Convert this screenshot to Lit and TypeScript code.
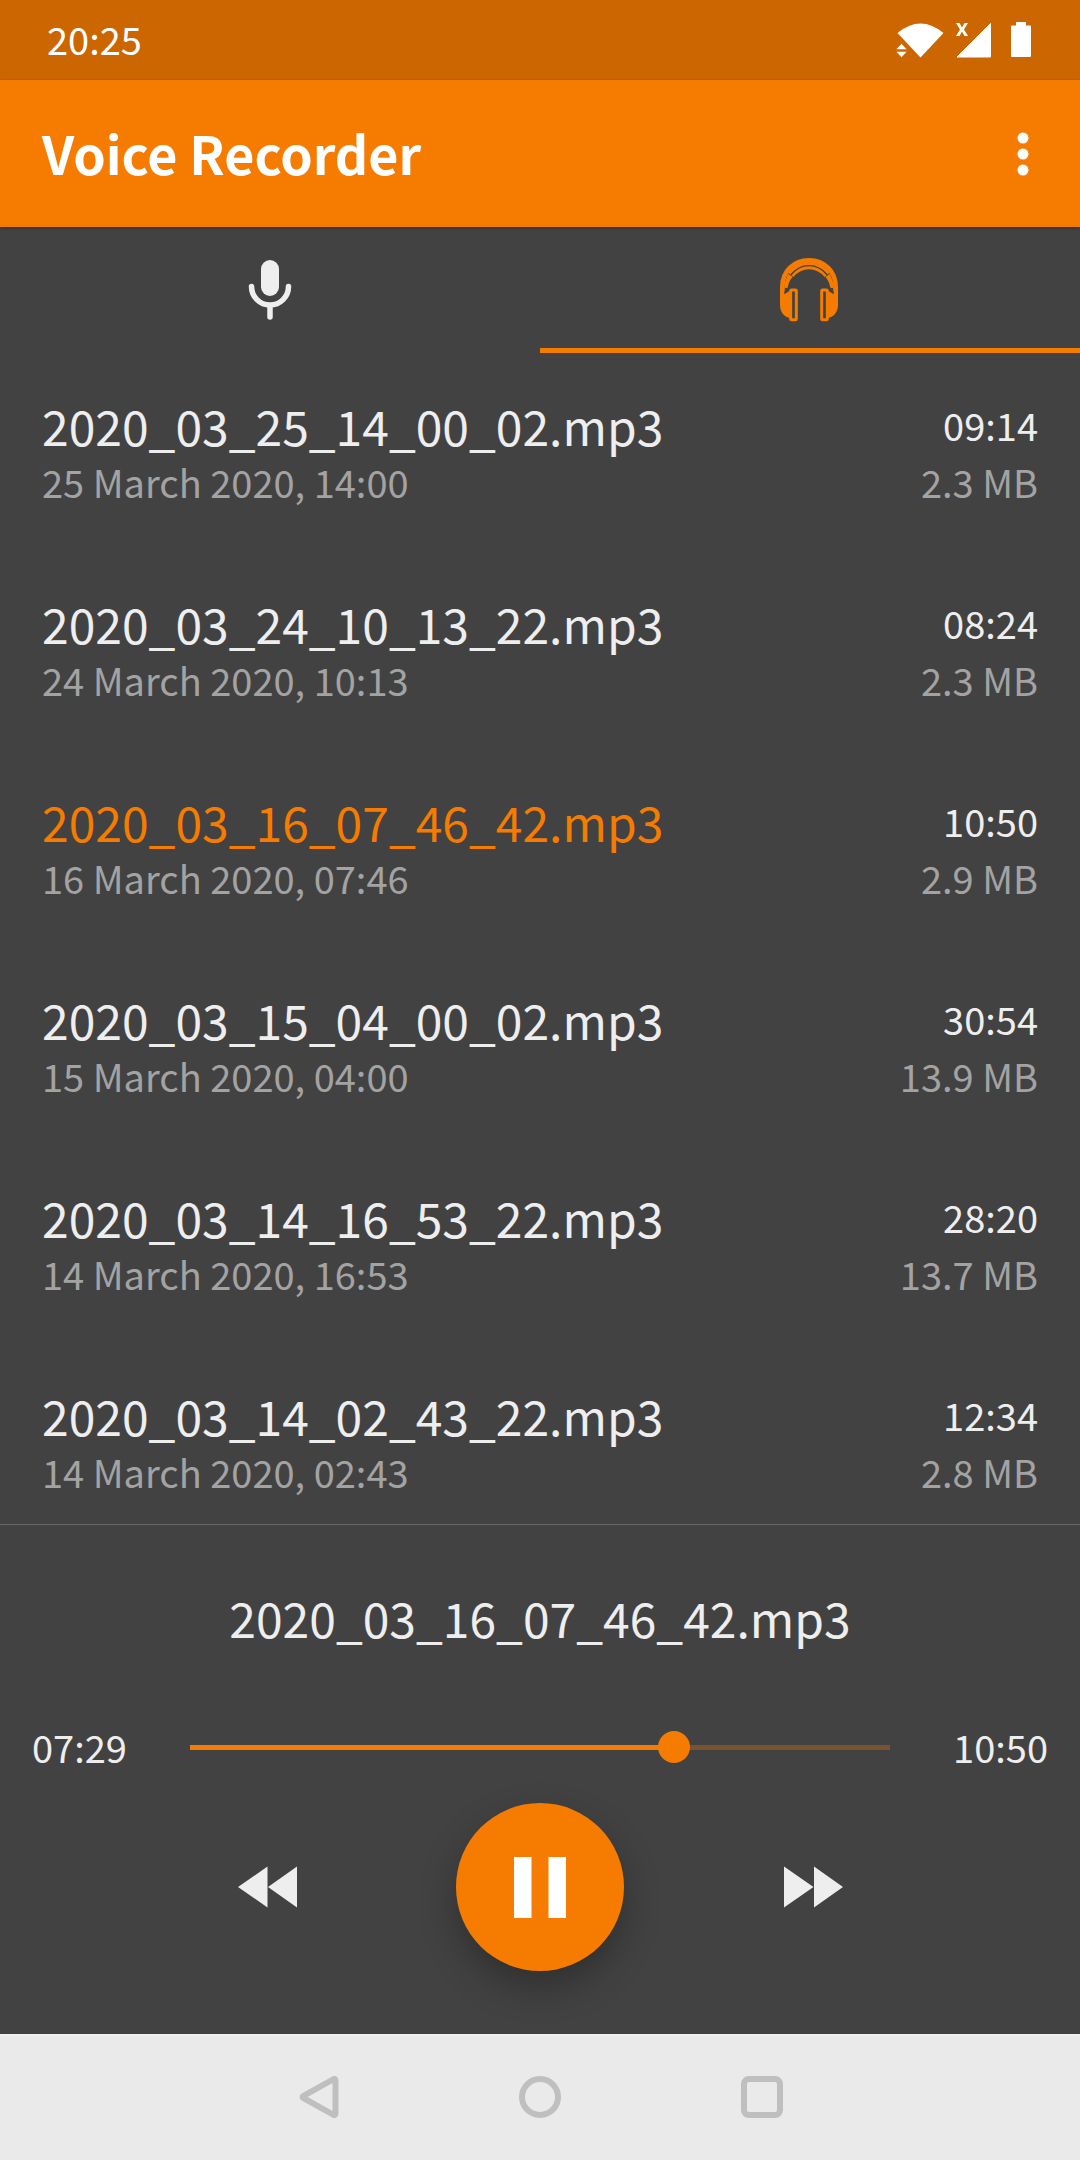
import { LitElement, html, svg, css } from "lit";
import { customElement, property, state } from "lit/decorators.js";
import { classMap } from "lit/directives/class-map.js";

interface Recording {
  name: string;
  date: string;
  length: string;
  size: string;
}

const RECORDINGS: Recording[] = [
  { name: "2020_03_25_14_00_02.mp3", date: "25 March 2020, 14:00", length: "09:14", size: "2.3 MB" },
  { name: "2020_03_24_10_13_22.mp3", date: "24 March 2020, 10:13", length: "08:24", size: "2.3 MB" },
  { name: "2020_03_16_07_46_42.mp3", date: "16 March 2020, 07:46", length: "10:50", size: "2.9 MB" },
  { name: "2020_03_15_04_00_02.mp3", date: "15 March 2020, 04:00", length: "30:54", size: "13.9 MB" },
  { name: "2020_03_14_16_53_22.mp3", date: "14 March 2020, 16:53", length: "28:20", size: "13.7 MB" },
  { name: "2020_03_14_02_43_22.mp3", date: "14 March 2020, 02:43", length: "12:34", size: "2.8 MB" },
];

const toSeconds = (clock: string) => {
  const [m, s] = clock.split(":").map(Number);
  return m * 60 + s;
};

const toClock = (seconds: number) =>
  `${String(Math.floor(seconds / 60)).padStart(2, "0")}:${String(seconds % 60).padStart(2, "0")}`;

// One earcup with its cushion; the right one is the mirror of the left.
const earcup = svg`
  <path d="M120 188V240C120 262 134 278 154 280V194L133 208V188Z" fill="currentColor"/>
  <rect x="152" y="195" width="17" height="89" rx="3" fill="none" stroke="currentColor" stroke-width="9"/>
`;

@customElement("status-bar")
export class StatusBar extends LitElement {
  static styles = css`
    :host {
      display: flex;
      justify-content: space-between;
      align-items: center;
      height: 80px;
      padding: 0 48px 0 47px;
      box-sizing: border-box;
      background: #cc6600;
      color: #fff;
      font-size: 38px;
      line-height: 54px;
    }
    .time {
      padding-bottom: 2px;
    }
    .icons {
      display: block;
      fill: currentColor;
    }
  `;
  render() {
    return html`
      <span class="time">20:25</span>
      <svg class="icons" width="136" height="40" viewBox="896 20 136 40" role="img" aria-label="Wi-Fi, no signal, battery full">
        <path d="M897.5 33Q920.500 14 943.500 33L920.500 57.500Z" />
        <path d="M901.500 43.500L907 49.500H896ZM896 51.500H907L901.500 57.500Z" stroke="#cc6600" stroke-width="0.500" />
        <path d="M956 23H959.500L962 27.500L964.500 23H968L964 29.500L968 36H964.500L962 31.500L959.500 36H956L960 29.500Z" />
        <path d="M990.500 23.500V57H957Z" stroke="currentColor" stroke-width="1" stroke-linejoin="round" />
        <path d="M1016 22H1026V25.500H1030Q1031 25.500 1031 26.500V56Q1031 57 1030 57H1012Q1011 57 1011 56V26.500Q1011 25.500 1012 25.500H1016Z" />
      </svg>
    `;
  }
}

@customElement("recording-row")
export class RecordingRow extends LitElement {
  @property({ attribute: false }) recording!: Recording;
  @property({ type: Boolean }) active = false;

  static styles = css`
    :host {
      display: block;
    }
    .row {
      display: grid;
      grid-template-columns: 1fr auto;
      grid-template-rows: 60px 54px;
      align-items: center;
      width: 100%;
      padding: 42px;
      border: 0;
      background: none;
      color: #eeeeee;
      font: inherit;
      font-size: 38px;
      line-height: 54px;
      text-align: left;
    }
    .name {
      font-size: 48px;
      line-height: 60px;
    }
    .active {
      color: #f57c00;
    }
    .end {
      text-align: right;
    }
    .sub {
      color: #a3a3a3;
    }
  `;
  render() {
    const r = this.recording;
    return html`
      <button class="row" type="button">
        <span class=${classMap({ name: true, active: this.active })}>${r.name}</span>
        <span class="end">${r.length}</span>
        <span class="sub">${r.date}</span>
        <span class="sub end">${r.size}</span>
      </button>
    `;
  }
}

@customElement("audio-player")
export class AudioPlayer extends LitElement {
  @property({ attribute: false }) recording!: Recording;
  @state() private position = 449;

  static styles = css`
    :host {
      display: block;
      border-top: 1px solid #686868;
      padding: 62px 32px 63px;
      color: #eeeeee;
    }
    .title {
      margin: 0;
      font-size: 48px;
      font-weight: 400;
      line-height: 60px;
      text-align: center;
    }
    .seek {
      display: grid;
      grid-template-columns: 142px 1fr 142px;
      align-items: center;
      height: 60px;
      margin-top: 70px;
      font-size: 38px;
      line-height: 54px;
    }
    .total {
      text-align: right;
    }
    .slider {
      appearance: none;
      width: 100%;
      height: 32px;
      margin: 0;
      background: none;
    }
    .slider::-webkit-slider-runnable-track {
      height: 32px;
      background: linear-gradient(
          to right,
          #f57c00 var(--progress),
          #79532f var(--progress)
        )
        center / calc(100% - 32px) 5px no-repeat;
    }
    .slider::-webkit-slider-thumb {
      appearance: none;
      width: 32px;
      height: 32px;
      border-radius: 50%;
      background: #f57c00;
    }
    .controls {
      display: flex;
      justify-content: center;
      align-items: center;
      gap: 147px;
      margin-top: 26px;
    }
    .skip,
    .play {
      display: grid;
      place-items: center;
      padding: 0;
      border: 0;
      border-radius: 50%;
      background: none;
      color: inherit;
    }
    .skip {
      width: 84px;
      height: 84px;
    }
    .play {
      width: 168px;
      height: 168px;
      background: #f57c00;
      color: #fff;
      box-shadow: 0 16px 36px rgba(0, 0, 0, 0.28);
    }
    .icon {
      display: block;
      fill: currentColor;
    }
  `;

  private seek(e: Event) {
    this.position = Number((e.target as HTMLInputElement).value);
  }

  render() {
    const total = toSeconds(this.recording.length);
    return html`
      <h2 class="title">${this.recording.name}</h2>
      <div class="seek">
        <span>${toClock(this.position)}</span>
        <input
          class="slider"
          type="range"
          aria-label="Playback position"
          min="0"
          max=${total}
          .value=${String(this.position)}
          style="--progress: ${(this.position / total) * 100}%"
          @input=${this.seek}
        />
        <span class="total">${this.recording.length}</span>
      </div>
      <div class="controls">
        <button class="skip" type="button" aria-label="Previous">
          <svg class="icon" width="60" height="42" viewBox="0 0 60 42"><path d="M1 21L30.500 0.500V41.500ZM31 21L60 0.500V41.500Z" /></svg>
        </button>
        <button class="play" type="button" aria-label="Pause">
          <svg class="icon" width="52" height="61" viewBox="0 0 52 61"><path d="M0 0H17.500V61H0ZM34.500 0H52V61H34.500Z" /></svg>
        </button>
        <button class="skip" type="button" aria-label="Next">
          <svg class="icon" width="60" height="42" viewBox="0 0 60 42"><path d="M1 0.500L30.500 21L1 41.500ZM31 0.500L60 21L31 41.500Z" /></svg>
        </button>
      </div>
    `;
  }
}

@customElement("navigation-bar")
export class NavigationBar extends LitElement {
  static styles = css`
    :host {
      display: flex;
      justify-content: center;
      align-items: center;
      gap: 138px;
      height: 126px;
      box-shadow: inset 0 2px #f0f0f0;
      background: #eaeaea;
    }
    .key {
      display: grid;
      place-items: center;
      width: 84px;
      height: 84px;
      padding: 0;
      border: 0;
      background: none;
      color: #bfbfbf;
    }
    .icon {
      fill: none;
      stroke: currentColor;
      stroke-width: 6;
      stroke-linejoin: round;
    }
  `;
  render() {
    return html`
      <button class="key" type="button" aria-label="Back">
        <svg class="icon" width="42" height="42" viewBox="0 0 42 42"><path d="M6.500 19.800L36.800 3Q38.500 2.500 38.500 5V37Q38.500 39.500 36.800 39L6.500 22.200Q4.500 21 6.500 19.800Z" /></svg>
      </button>
      <button class="key" type="button" aria-label="Home">
        <svg class="icon" width="42" height="42" viewBox="0 0 42 42"><circle cx="21" cy="21" r="18" /></svg>
      </button>
      <button class="key" type="button" aria-label="Recent apps">
        <svg class="icon" width="42" height="42" viewBox="0 0 42 42"><rect x="3" y="3" width="36" height="36" rx="5" /></svg>
      </button>
    `;
  }
}

@customElement("app-root")
export class AppRoot extends LitElement {
  static styles = css`
    :host {
      display: flex;
      flex-direction: column;
      height: 100vh;
      overflow: hidden;
      background: #424242;
      color: #eeeeee;
      font-family: "Noto Sans CJK SC", "Noto Sans", sans-serif;
    }
    .appbar {
      display: flex;
      justify-content: space-between;
      align-items: center;
      height: 147px;
      padding: 0 36px 0 42px;
      background: #f57c00;
      color: #fff;
      box-shadow: 0 1px 3px rgba(0, 0, 0, 0.3);
    }
    .heading {
      margin: 0;
      padding-bottom: 2px;
      font-size: 52px;
      font-weight: 700;
      line-height: 60px;
    }
    .menu {
      display: grid;
      place-items: center;
      width: 43px;
      height: 84px;
      padding: 0;
      border: 0;
      background: none;
      color: inherit;
    }
    .tabs {
      display: grid;
      grid-template-columns: 1fr 1fr;
      height: 126px;
    }
    .tab {
      display: grid;
      place-items: center;
      padding: 5px 0 0;
      border: 0;
      border-bottom: 5px solid transparent;
      background: none;
      color: #eeeeee;
    }
    .selected {
      border-bottom-color: #f57c00;
      color: #f57c00;
    }
    .list {
      flex: 1 1 0;
      min-height: 0;
      margin: 0;
      padding: 0;
      overflow: hidden;
      list-style: none;
    }
  `;
  render() {
    const current = RECORDINGS[2];
    return html`
      <status-bar></status-bar>
      <header class="appbar">
        <h1 class="heading">Voice Recorder</h1>
        <button class="menu" type="button" aria-label="More options">
          <svg width="12" height="44" viewBox="0 0 12 44" fill="currentColor">
            <circle cx="6" cy="6" r="5.500" /><circle cx="6" cy="22" r="5.500" /><circle cx="6" cy="38" r="5.500" />
          </svg>
        </button>
      </header>
      <div class="tabs" role="tablist">
        <button class="tab" type="button" role="tab" aria-selected="false" aria-label="Recorder">
          <svg width="44" height="60" viewBox="0 0 44 60">
            <rect x="13" y="0" width="18" height="36" rx="9" fill="currentColor" />
            <path d="M3.500 26.500A18.500 18.500 0 0 0 40.500 26.500M22 45V57" fill="none" stroke="currentColor" stroke-width="5.500" stroke-linecap="round" />
          </svg>
        </button>
        <button class="tab selected" type="button" role="tab" aria-selected="true" aria-label="Player">
          <svg width="60" height="64" viewBox="120 99 180 192">
            <path d="M127 198V186C127 138 162 106 207 106S287 138 287 186V198" fill="none" stroke="currentColor" stroke-width="14" />
            <path d="M152 149Q175 122 207 122T262 149" fill="none" stroke="currentColor" stroke-width="21" stroke-linejoin="round" />
            <path d="M133 176L144 146L158 156Q147 166 143 188L133 190ZM281 176L270 146L256 156Q267 166 271 188L281 190Z" fill="currentColor" />
            <path d="M152 150Q175 122 207 122T262 150" fill="none" stroke="#424242" stroke-width="4" />
            ${earcup}
            <g transform="translate(414 0) scale(-1 1)">${earcup}</g>
          </svg>
        </button>
      </div>
      <ul class="list">
        ${RECORDINGS.map(
          (r) => html`<li><recording-row .recording=${r} ?active=${r === current}></recording-row></li>`
        )}
      </ul>
      <audio-player .recording=${current}></audio-player>
      <navigation-bar></navigation-bar>
    `;
  }
}
